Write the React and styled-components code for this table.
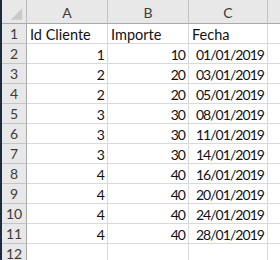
import React from 'react'
import styled, { createGlobalStyle } from 'styled-components'

const GlobalStyle = createGlobalStyle`
  html, body { margin: 0; padding: 0; background: #ffffff; }
  body { font-family: Lato, "Open Sans", sans-serif; overflow: hidden; }
`

const columns = ['A', 'B', 'C', '']

const rows = [
  ['Id Cliente', 'Importe', 'Fecha'],
  [1, 10, '01/01/2019'],
  [2, 20, '03/01/2019'],
  [2, 20, '05/01/2019'],
  [3, 30, '08/01/2019'],
  [3, 30, '11/01/2019'],
  [3, 30, '14/01/2019'],
  [4, 40, '16/01/2019'],
  [4, 40, '20/01/2019'],
  [4, 40, '24/01/2019'],
  [4, 40, '28/01/2019'],
  ['', '', ''],
]

const App = () => {
  return (
    <>
      <GlobalStyle />
      <Window>
        <Strip />
        <Sheet>
          <Corner>
            <svg width="25" height="23" viewBox="0 0 25 23">
              <polygon points="21,8 21,20 9,20" fill="#c9c9c9" />
            </svg>
          </Corner>
          {columns.map((c, i) => (
            <ColHead key={i}>{c}</ColHead>
          ))}
          {rows.map((r, i) => (
            <React.Fragment key={i}>
              <RowHead>{i + 1}</RowHead>
              {r.map((v, j) => (
                <Cell key={j} $num={typeof v === 'number' || (j === 2 && i > 0)}>{v}</Cell>
              ))}
              <Cell />
            </React.Fragment>
          ))}
        </Sheet>
      </Window>
    </>
  )
}

const Window = styled.div`
display: flex;
width: 280px;
height: 260px;
overflow: hidden;
`

const Strip = styled.div`
width: 2px;
flex-shrink: 0;
background: #1d2b3b;
`

const Sheet = styled.div`
display: grid;
grid-template-columns: 25px 81px 81px 79px 40px;
grid-template-rows: 24px;
grid-auto-rows: 20px;
align-content: start;
`

const Corner = styled.div`
box-sizing: border-box;
background: #e8e8e8;
border-right: 1px solid #bdbdbd;
border-bottom: 1px solid #a9a9a9;
display: flex;
`

const ColHead = styled.div`
box-sizing: border-box;
background: #e8e8e8;
border-right: 1px solid #c4c4c4;
border-bottom: 1px solid #a9a9a9;
color: #3c3c3c;
font-size: 14px;
display: flex;
align-items: center;
justify-content: center;
padding-top: 1px;
`

const RowHead = styled.div`
box-sizing: border-box;
background: #e8e8e8;
border-right: 1px solid #a9a9a9;
border-bottom: 1px solid #c4c4c4;
color: #3c3c3c;
font-size: 14px;
display: flex;
align-items: center;
justify-content: center;
overflow: hidden;
`

const Cell = styled.div`
box-sizing: border-box;
border-right: 1px solid #d9d9d9;
border-bottom: 1px solid #d9d9d9;
color: #111111;
font-size: ${p => (p.$num ? '14px' : '14.5px')};
font-variant-numeric: tabular-nums;
letter-spacing: ${p => (p.$num ? '-0.95px' : '0')};
display: flex;
align-items: center;
justify-content: ${p => (p.$num ? 'flex-end' : 'flex-start')};
padding: 1px 3px 0 3px;
white-space: nowrap;
overflow: hidden;
`

export default App
